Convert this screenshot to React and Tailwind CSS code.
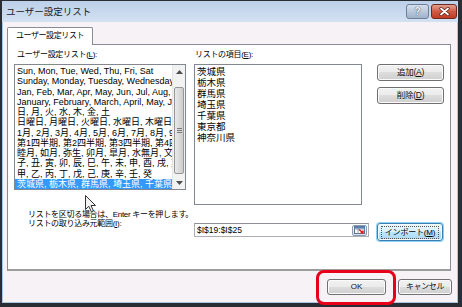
const leftItems = [
  "Sun, Mon, Tue, Wed, Thu, Fri, Sat",
  "Sunday, Monday, Tuesday, Wednesday, Thursday, Friday, Saturday",
  "Jan, Feb, Mar, Apr, May, Jun, Jul, Aug, Sep, Oct, Nov, Dec",
  "January, February, March, April, May, June, July, August, September",
  "日, 月, 火, 水, 木, 金, 土",
  "日曜日, 月曜日, 火曜日, 水曜日, 木曜日, 金曜日, 土曜日",
  "1月, 2月, 3月, 4月, 5月, 6月, 7月, 8月, 9月, 10月, 11月, 12月",
  "第1四半期, 第2四半期, 第3四半期, 第4四半期",
  "睦月, 如月, 弥生, 卯月, 皐月, 水無月, 文月, 葉月, 長月, 神無月",
  "子, 丑, 寅, 卯, 辰, 巳, 午, 未, 申, 酉, 戌, 亥",
  "甲, 乙, 丙, 丁, 戊, 己, 庚, 辛, 壬, 癸",
  "茨城県, 栃木県, 群馬県, 埼玉県, 千葉県, 東京都, 神奈川県",
];

const rightItems = ["茨城県", "栃木県", "群馬県", "埼玉県", "千葉県", "東京都", "神奈川県"];

const btn =
  "flex items-center justify-center rounded-[3px] border border-[#707070] bg-[linear-gradient(#f2f2f2,#ebebeb_50%,#dddddd_50%,#cfcfcf)] shadow-[inset_0_0_0_1px_#fbfbfb] text-[#111]";

export default function App() {
  return (
    <div className="relative w-[462px] h-[307px] overflow-hidden bg-[#2a2e34] pt-px pl-[2px] font-['Liberation_Sans','Noto_Sans_CJK_JP',sans-serif] text-black">
      <div className="w-[456px] h-[302px] flex flex-col">
        {/* Title bar */}
        <div className="h-[21px] flex items-start bg-linear-to-b from-[#bcd0e9] to-[#d3e1f2] pr-px">
          <div className="flex-1 pl-[4px] h-[21px] leading-[21px] text-[9.5px] text-[#1a1a1a]">ユーザー設定リスト</div>
          <div className="mt-[3px] flex gap-[2px]">
            <div className="w-[23px] h-[15px] rounded-[3px] border border-[#6f7f96] bg-linear-to-b from-[#d5e0ee] to-[#9fb2ca] flex items-center justify-center text-[10px] font-bold leading-none text-[#f4f7fb] [text-shadow:0_0_1px_#44546a,0_0_1px_#44546a]">
              ?
            </div>
            <div className="w-[26px] h-[15px] rounded-[3px] border border-[#6b2a22] bg-linear-to-b from-[#e2a091] via-[#cf5a44] to-[#c23a22] flex items-center justify-center">
              <svg width="11" height="9" viewBox="0 0 11 9">
                <path d="M2 1.5 L9 7.5 M9 1.5 L2 7.5" stroke="#5a1c14" strokeWidth="3.2" strokeLinecap="round" />
                <path d="M2 1.5 L9 7.5 M9 1.5 L2 7.5" stroke="#ffffff" strokeWidth="1.8" strokeLinecap="round" />
              </svg>
            </div>
          </div>
        </div>

        {/* Body */}
        <div className="flex-1 flex flex-col bg-[#f6f2f6] border-l border-r border-b border-[#a9c7e5]">
          {/* Tab */}
          <div className="mt-[5px] ml-[4px] flex">
            <div className="relative z-10 -mb-px w-[86px] h-[18px] bg-white border border-b-0 border-[#898c95] rounded-t-[2px] flex items-center justify-center pb-px text-[8px] tracking-[-0.4px]">
              ユーザー設定リスト
            </div>
          </div>

          {/* Panel */}
          <div className="ml-[4px] w-[444px] h-[227px] bg-white border border-[#898c95] border-b-2 border-b-[#9c9c9c] text-[8px] tracking-[-0.3px]">
            {/* Top section */}
            <div className="pt-[3px] pl-[6px] flex">
              {/* Left column */}
              <div className="w-[172px] flex flex-col">
                <div className="h-[14px] leading-[14px] pl-[3px]">
                  ユーザー設定リスト(<u>L</u>):
                </div>
                <div className="mt-[2px] h-[126px] border border-[#828790] bg-white flex tracking-normal">
                  <div className="flex-1 overflow-hidden pt-px text-[9px] leading-[10.25px]">
                    {leftItems.map((t, i) => (
                      <div
                        key={i}
                        className={
                          "h-[10.25px] whitespace-nowrap pl-[2px] " +
                          (i === leftItems.length - 1 ? "bg-[#3399ff] text-white" : "")
                        }
                      >
                        {t}
                      </div>
                    ))}
                  </div>
                  {/* Scrollbar */}
                  <div className="w-[13px] flex flex-col bg-[#f2f2f2] border-l border-[#e6e6e6]">
                    <div className="h-[13px] flex items-center justify-center">
                      <svg width="7" height="4" viewBox="0 0 7 4">
                        <path d="M0 4 L3.5 0 L7 4 Z" fill="#4d4d4d" />
                      </svg>
                    </div>
                    <div className="mt-[9px] h-[87px] mx-px rounded-[2px] border border-[#979797] bg-linear-to-r from-[#e9e9e9] to-[#cdcdcd] flex flex-col items-center justify-center gap-px">
                      <div className="w-[5px] h-px bg-[#7a7a7a]" />
                      <div className="w-[5px] h-px bg-[#7a7a7a]" />
                      <div className="w-[5px] h-px bg-[#7a7a7a]" />
                    </div>
                    <div className="mt-[2px] h-[13px] flex items-center justify-center">
                      <svg width="7" height="4" viewBox="0 0 7 4">
                        <path d="M0 0 L3.5 4 L7 0 Z" fill="#4d4d4d" />
                      </svg>
                    </div>
                  </div>
                </div>
              </div>

              {/* Middle column */}
              <div className="ml-[8px] w-[168px] flex flex-col">
                <div className="h-[14px] leading-[14px] pl-px">
                  リストの項目(<u>E</u>):
                </div>
                <div className="mt-[2px] h-[141px] border border-[#828790] bg-white pt-px pl-[2px] text-[9.5px] leading-[11px] tracking-normal">
                  {rightItems.map((t) => (
                    <div key={t} className="h-[11px]">
                      {t}
                    </div>
                  ))}
                </div>
              </div>

              {/* Buttons column */}
              <div className="ml-[15px] w-[67px] pt-[16px] flex flex-col gap-[6px] text-[8.5px]">
                <div className={btn + " h-[17px]"}>
                  追加(<u>A</u>)
                </div>
                <div className={btn + " h-[17px]"}>
                  削除(<u>D</u>)
                </div>
              </div>
            </div>

            {/* Bottom section */}
            <div className="mt-[5px] pl-[20px] h-[9px] leading-[9px] whitespace-nowrap">
              リストを区切る場合は、Enter キーを押します。
            </div>
            <div className="flex items-start">
              <div className="w-[186px] pl-[20px] h-[9px] leading-[9px] whitespace-nowrap">
                リストの取り込み元範囲(<u>I</u>):
              </div>
              <div className="mt-[4px] w-[175px] h-[14px] border border-[#abadb3] border-t-[#8e9097] bg-white flex items-center tracking-normal">
                <div className="flex-1 pl-[2px] text-[8.5px] leading-[12px]">$I$19:$I$25</div>
                <div className="mr-px w-[15px] h-[11px] rounded-[2px] border border-[#8a9bb3] bg-linear-to-b from-[#f4f7fb] to-[#d7e1ee] flex items-center justify-center">
                  <svg width="11" height="8" viewBox="0 0 11 8">
                    <rect x="0.5" y="0.5" width="10" height="7" fill="#ffffff" stroke="#5d7394" />
                    <path d="M0.5 3 H10.5 M4 0.5 V7.5" stroke="#8da2c0" strokeWidth="1" />
                    <rect x="0.5" y="0.5" width="10" height="2" fill="#5d7fb0" />
                    <path d="M5 3.5 L9 7 M9 7 L9 4.5 M9 7 L6.5 7" stroke="#e02020" strokeWidth="1.6" />
                  </svg>
                </div>
              </div>
              <div className="ml-[8px] mt-[4px] w-[66px] h-[18px] rounded-[3px] border border-[#3c7fb1] bg-[linear-gradient(#eaf6fd,#d9f0fc_50%,#bee6fd_50%,#a7d9f5)] shadow-[0_0_0_1px_#8ed0f3,inset_0_0_0_1px_#f4fbff] flex items-center justify-center">
                <div className="px-[3px] border border-dotted border-[#555] leading-[11px] tracking-[-0.2px]">
                  インポート(<u>M</u>)
                </div>
              </div>
            </div>
          </div>

          {/* OK / Cancel */}
          <div className="mt-[8px] mr-[5px] flex justify-end gap-[12px] text-[8px]">
            <div className={btn + " w-[59px] h-[16px]"}>OK</div>
            <div className={btn + " w-[54px] h-[16px] tracking-[-0.4px]"}>キャンセル</div>
          </div>
        </div>
      </div>

      {/* Red highlight annotation */}
      <div className="absolute left-[316px] top-[270px] w-[80px] h-[35px] rounded-[8px] border-[3px] border-[#e8001a]" />

      {/* Mouse cursor */}
      <svg className="absolute left-[85px] top-[195px]" width="12" height="18" viewBox="0 0 12 18">
        <path
          d="M0.5 0.5 L0.5 14.5 L3.8 11.3 L6.3 16.8 L8.4 15.9 L6 10.5 L10.5 10.5 Z"
          fill="#f4f4f4"
          stroke="#333333"
          strokeWidth="1"
          strokeLinejoin="round"
        />
      </svg>
    </div>
  );
}
